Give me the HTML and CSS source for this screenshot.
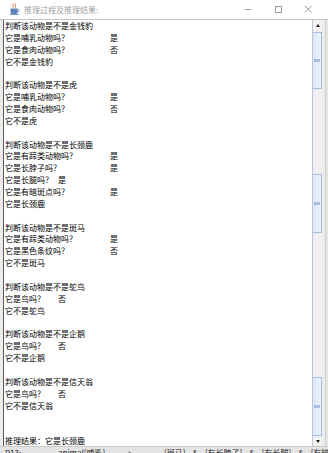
FILE: index.html
```html
<!DOCTYPE html>
<html lang="zh">
<head>
<meta charset="utf-8">
<title>推理过程及推理结果:</title>
<link rel="stylesheet" href="styles.css">
</head>
<body>
<div class="window">
  <div class="titlebar">
    <svg class="app-icon" width="11" height="12" viewBox="0 0 11 12">
      <path d="M4 0.5 C3 2 5 2.5 4 4.5" fill="none" stroke="#e0703a" stroke-width="1"/>
      <path d="M6.5 0.5 C5.5 2 7.5 2.5 6.5 4.5" fill="none" stroke="#e0703a" stroke-width="1"/>
      <path d="M1.5 5.5 H8.5 V9 C8.5 10.5 7.5 11 6.5 11 H3.5 C2.5 11 1.5 10.5 1.5 9 Z" fill="#5b84b8"/>
      <path d="M8.5 6.3 C10.5 6.3 10.5 9 8.3 9" fill="none" stroke="#5b84b8" stroke-width="1"/>
      <rect x="0.5" y="11" width="9.5" height="1" fill="#7a9cc8"/>
    </svg>
    <span class="title">推理过程及推理结果:</span>
    <div class="controls">
      <svg class="ctl" width="10" height="10" viewBox="0 0 10 10"><path d="M2 5.5 H8" stroke="#9a9a9a" stroke-width="1"/></svg>
      <svg class="ctl" width="10" height="10" viewBox="0 0 10 10"><rect x="2.5" y="2.5" width="6" height="6" fill="none" stroke="#9a9a9a" stroke-width="1"/></svg>
      <svg class="ctl" width="10" height="10" viewBox="0 0 10 10"><path d="M2 2 L8.5 8.5 M8.5 2 L2 8.5" stroke="#9a9a9a" stroke-width="1"/></svg>
    </div>
  </div>
  <div class="client">
    <div class="textarea">
      <div class="line">判断该动物是不是金钱豹</div>
      <div class="line"><span class="q">它是哺乳动物吗？</span>是</div>
      <div class="line"><span class="q">它是食肉动物吗？</span>否</div>
      <div class="line">它不是金钱豹</div>
      <div class="line"></div>
      <div class="line">判断该动物是不是虎</div>
      <div class="line"><span class="q">它是哺乳动物吗？</span>是</div>
      <div class="line"><span class="q">它是食肉动物吗？</span>否</div>
      <div class="line">它不是虎</div>
      <div class="line"></div>
      <div class="line">判断该动物是不是长颈鹿</div>
      <div class="line"><span class="q">它是有蹄类动物吗？</span>是</div>
      <div class="line"><span class="q">它是长脖子吗？</span>是</div>
      <div class="line"><span class="q short">它是长腿吗？</span>是</div>
      <div class="line"><span class="q">它是有暗斑点吗？</span>是</div>
      <div class="line">它是长颈鹿</div>
      <div class="line"></div>
      <div class="line">判断该动物是不是斑马</div>
      <div class="line"><span class="q">它是有蹄类动物吗？</span>是</div>
      <div class="line"><span class="q">它是黑色条纹吗？</span>否</div>
      <div class="line">它不是斑马</div>
      <div class="line"></div>
      <div class="line">判断该动物是不是鸵鸟</div>
      <div class="line"><span class="q short">它是鸟吗？</span>否</div>
      <div class="line">它不是鸵鸟</div>
      <div class="line"></div>
      <div class="line">判断该动物是不是企鹅</div>
      <div class="line"><span class="q short">它是鸟吗？</span>否</div>
      <div class="line">它不是企鹅</div>
      <div class="line"></div>
      <div class="line">判断该动物是不是信天翁</div>
      <div class="line"><span class="q short">它是鸟吗？</span>否</div>
      <div class="line">它不是信天翁</div>
      <div class="line"></div>
      <div class="line"></div>
      <div class="line">推理结果：它是长颈鹿</div>
    </div>
    <div class="scrollbar">
      <div class="sb-btn"><span class="tri up"></span></div>
      <div class="sb-gap g1"></div>
      <div class="thumb t1"><span class="grip"></span></div>
      <div class="sb-gap g2"></div>
      <div class="thumb t2"><span class="grip"></span></div>
      <div class="sb-gap g3"></div>
      <div class="thumb t3"><span class="grip"></span></div>
      <div class="sb-gap g4"></div>
      <div class="sb-btn down-btn"><span class="tri down"></span></div>
    </div>
    <div class="right-edge"></div>
  </div>
  <div class="behind">
    <span class="b1">R13:</span><span class="b2">animal[哺乳]--------&gt;</span><span class="b3">[斑马]</span><span class="amp">&amp;</span><span>[有长脖子]</span><span class="amp">&amp;</span><span>[有长腿]</span><span class="amp">&amp;</span><span>[有暗斑点]</span>
  </div>
</div>
</body>
</html>
```

FILE: styles.css
```css
html, body {
  margin: 0;
  padding: 0;
  background: #ffffff;
}

body {
  width: 328px;
  height: 453px;
  overflow: hidden;
  font-family: "Noto Sans CJK SC", "Noto Sans", sans-serif;
}

.window {
  display: flex;
  flex-direction: column;
  width: 328px;
  height: 453px;
}

.titlebar {
  height: 19px;
  border-bottom: 1px solid #c4c4c4;
  display: flex;
  align-items: center;
  background: #ffffff;
  flex: none;
}

.app-icon {
  margin-left: 9px;
  margin-top: -1px;
}

.title {
  margin-left: 4px;
  font-size: 8px;
  color: #a0a0a0;
  line-height: 10px;
}

.controls {
  margin-left: auto;
  display: flex;
  gap: 20px;
  margin-right: 15px;
  margin-top: -1px;
}

.client {
  display: flex;
  height: 426px;
  flex: none;
  border-left: 3px solid #ececec;
}

.textarea {
  flex: 1;
  border-left: 1px solid #5a5a5a;
  padding-left: 1px;
  font-size: 8px;
  line-height: 11.87px;
  color: #000000;
  overflow: hidden;
  background: #ffffff;
}

.line {
  height: 11.87px;
  white-space: nowrap;
}

.q {
  display: inline-block;
  width: 105px;
}

.q.short {
  width: 53px;
}

.scrollbar {
  width: 9px;
  flex: none;
  display: flex;
  flex-direction: column;
  background: #efefef;
  border-left: 1px solid #b9c6da;
}

.sb-btn {
  height: 10px;
  flex: none;
  display: flex;
  align-items: center;
  justify-content: center;
  background: #f2f2f2;
}

.down-btn {
  height: 9px;
}

.tri {
  width: 0;
  height: 0;
  border-left: 2.5px solid transparent;
  border-right: 2.5px solid transparent;
}

.tri.up {
  border-bottom: 3px solid #222;
}

.tri.down {
  border-top: 3px solid #222;
}

.sb-gap {
  flex: none;
}

.g1 { height: 2px; }
.g2 { height: 85px; }
.g3 { height: 144px; }
.g4 { height: 1px; }

.thumb {
  flex: none;
  box-sizing: border-box;
  border: 1px solid #a7bde0;
  border-left-width: 0;
  background: linear-gradient(to right, #dce8f6, #eaf1fb);
  display: flex;
  align-items: center;
  justify-content: center;
}

.t1 { height: 57px; }
.t2 { height: 59px; }
.t3 { height: 59px; }

.grip {
  width: 6px;
  height: 3px;
  background: #a9bfe2;
}

.right-edge {
  width: 6px;
  flex: none;
  background: linear-gradient(to right, #ececec 0, #ececec 3px, #cfcfcf 3px, #cfcfcf 4px, #e4e4e4 4px);
}

.behind {
  height: 7px;
  flex: none;
  overflow: hidden;
  background: #e4e4e4;
  border-top: 1px solid #c8c8c8;
  box-sizing: border-box;
  font-size: 8px;
  line-height: 12px;
  color: #1a1a1a;
  white-space: nowrap;
  padding-left: 5px;
}

.behind span {
  display: inline-block;
}

.b1 { width: 53px; }
.b2 { width: 106px; }
.amp { margin: 0 7px; }
```
